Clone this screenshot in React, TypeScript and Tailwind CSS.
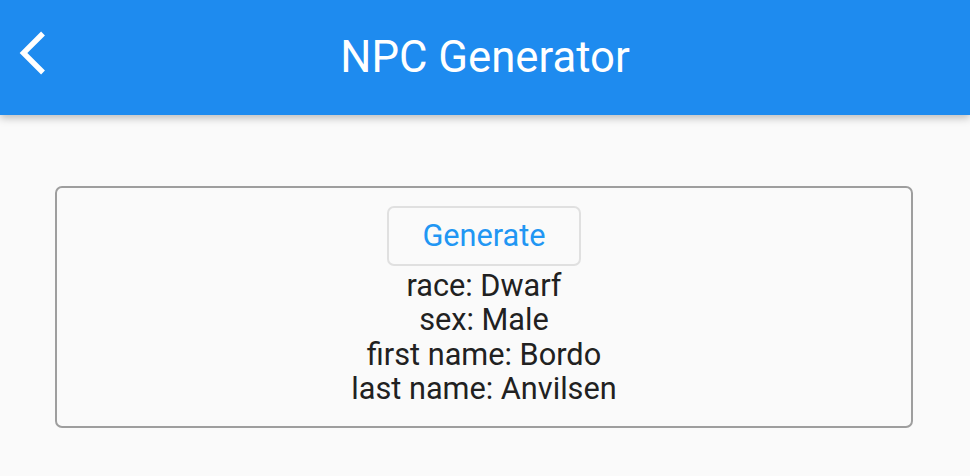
const BackIcon = () => (
  <svg viewBox="0 0 24 24" className="w-[52px] h-[52px]" fill="white">
    <path d="M17.51 3.87L15.73 2.1 5.84 12l9.9 9.9 1.77-1.77L9.38 12l8.13-8.13z" />
  </svg>
);

const npc = [
  { label: "race", value: "Dwarf" },
  { label: "sex", value: "Male" },
  { label: "first name", value: "Bordo" },
  { label: "last name", value: "Anvilsen" },
];

export default function App() {
  return (
    <div className="w-[970px] h-[476px] bg-[#fafafa] font-['Roboto',sans-serif] overflow-hidden">
      <header className="relative h-[115px] bg-[#1e8bef] flex items-center justify-center shadow-[0_3px_8px_rgba(0,0,0,0.25)]">
        <button className="absolute left-[7px] top-[27px]">
          <BackIcon />
        </button>
        <h1 className="text-white text-[43.7px] leading-none">NPC Generator</h1>
      </header>

      <main className="mt-[71px] ml-[55px] mr-[57px]">
        <div className="h-[242px] border-2 border-[#9e9e9e] rounded-[7px] flex flex-col items-center pt-[18px]">
          <button className="h-[60px] w-[194px] border-2 border-[#e0e0e0] rounded-[7px] text-[#2196f3] text-[30.7px] leading-none">
            Generate
          </button>
          <div className="mt-[3px] text-center text-[#212121] text-[30.7px] leading-[34.3px]">
            {npc.map((row) => (
              <p key={row.label}>
                {row.label}: {row.value}
              </p>
            ))}
          </div>
        </div>
      </main>
    </div>
  );
}
